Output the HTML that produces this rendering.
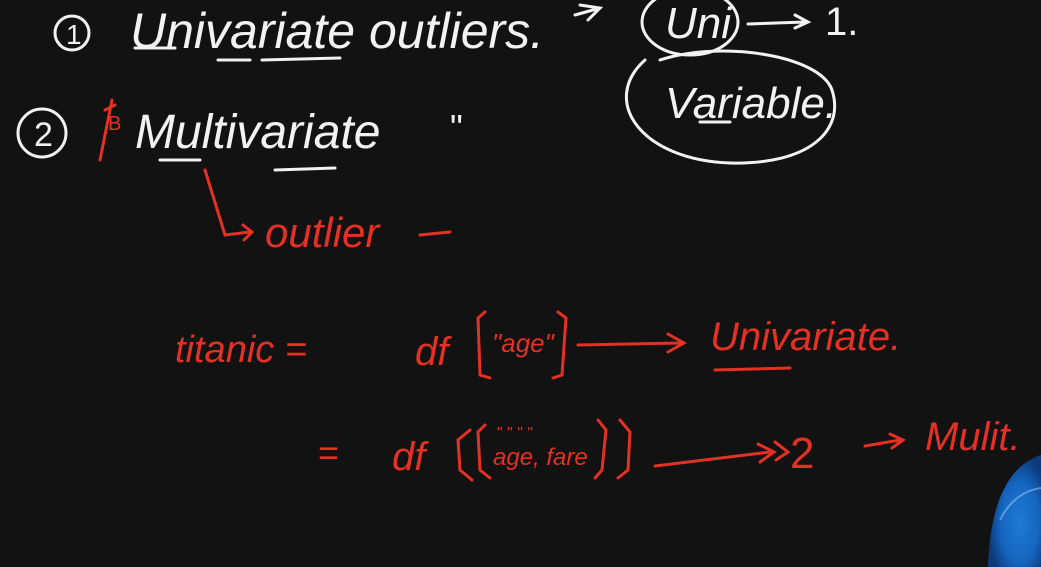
<!DOCTYPE html>
<html><head><meta charset="utf-8"><style>
html,body{margin:0;padding:0;background:#121212;width:1041px;height:567px;overflow:hidden}
svg{display:block}
text{font-family:"Liberation Sans Narrow","Liberation Sans",sans-serif}
</style></head><body>
<svg width="1041" height="567" viewBox="0 0 1041 567">
<rect width="1041" height="567" fill="#121212"/>
<defs><radialGradient id="b" cx="0.6" cy="0.6" r="0.6"><stop offset="0" stop-color="#1f7bd6"/><stop offset="0.6" stop-color="#1565c0"/><stop offset="1" stop-color="#0b3a7a"/></radialGradient></defs>
<g fill="none" stroke="#f2f2f2" stroke-width="3" stroke-linecap="round">
<circle cx="72" cy="33" r="17"/>
<circle cx="42" cy="133" r="24"/>
<path d="M135 48 L175 48 M218 60 L250 60 M262 60 L340 58"/>
<path d="M575 15 L600 8 M580 5 L600 8 L588 20"/>
<ellipse cx="690" cy="22" rx="48" ry="33"/>
<path d="M748 24 L805 22 M795 15 L808 22 L795 28"/>
<path d="M645 60 C600 100 640 160 730 163 C810 165 845 130 832 90 C820 55 720 40 660 60"/>
<path d="M700 122 L730 122"/>
<path d="M160 160 L200 160 M275 170 L335 168"/>
</g>
<g fill="#f2f2f2">
<text x="66" y="44" font-size="28">1</text>
<text x="34" y="146" font-size="34">2</text>
<text x="130" y="48" font-size="50" font-style="italic">Univariate outliers.</text>
<text x="665" y="38" font-size="44" font-style="italic">Uni</text>
<text x="825" y="35" font-size="40">1.</text>
<text x="665" y="118" font-size="44" font-style="italic">Variable.</text>
<text x="135" y="148" font-size="48" font-style="italic">Multivariate</text>
<text x="450" y="140" font-size="36">"</text>
</g>
<g fill="none" stroke="#e53024" stroke-width="3" stroke-linecap="round">
<path d="M105 110 L115 105 M112 100 L100 160"/>
<path d="M205 170 L225 235 L250 232 M243 225 L252 232 L244 240"/>
<path d="M420 235 L450 232"/>
<path d="M485 312 L478 318 L480 375 L490 378 M558 312 L566 318 L562 375 L553 378"/>
<path d="M578 345 L680 343 M668 334 L684 343 L668 352"/>
<path d="M715 370 L790 368"/>
<path d="M470 430 L458 440 L460 470 L472 480 M485 425 L478 432 L480 470 L490 478 M598 420 L606 430 L602 470 L595 478 M620 420 L630 432 L628 470 L618 478"/>
<path d="M655 466 L770 452 M758 444 L774 452 L760 462 M775 442 L788 452 L776 460"/>
<path d="M865 446 L900 440 M890 434 L903 440 L892 448"/>
</g>
<g fill="#e53024">
<text x="108" y="130" font-size="20">B</text>
<text x="265" y="247" font-size="42" font-style="italic">outlier</text>
<text x="175" y="362" font-size="38" font-style="italic">titanic =</text>
<text x="415" y="365" font-size="40" font-style="italic">df</text>
<text x="492" y="352" font-size="26" font-style="italic">"age"</text>
<text x="710" y="350" font-size="40" font-style="italic">Univariate.</text>
<text x="318" y="465" font-size="36">=</text>
<text x="392" y="470" font-size="40" font-style="italic">df</text>
<text x="497" y="438" font-size="16">" " "  "</text>
<text x="493" y="465" font-size="24" font-style="italic">age, fare</text>
<text x="790" y="468" font-size="44">2</text>
<text x="925" y="450" font-size="40" font-style="italic">Mulit.</text>
</g>
<path d="M1041 455 C1010 465 990 500 988 567 L1041 567 Z" fill="url(#b)"/>
<path d="M1000 520 C1010 500 1025 490 1041 488" stroke="#9fd0ff" stroke-width="2" fill="none" opacity="0.5"/>
</svg>
</body></html>
